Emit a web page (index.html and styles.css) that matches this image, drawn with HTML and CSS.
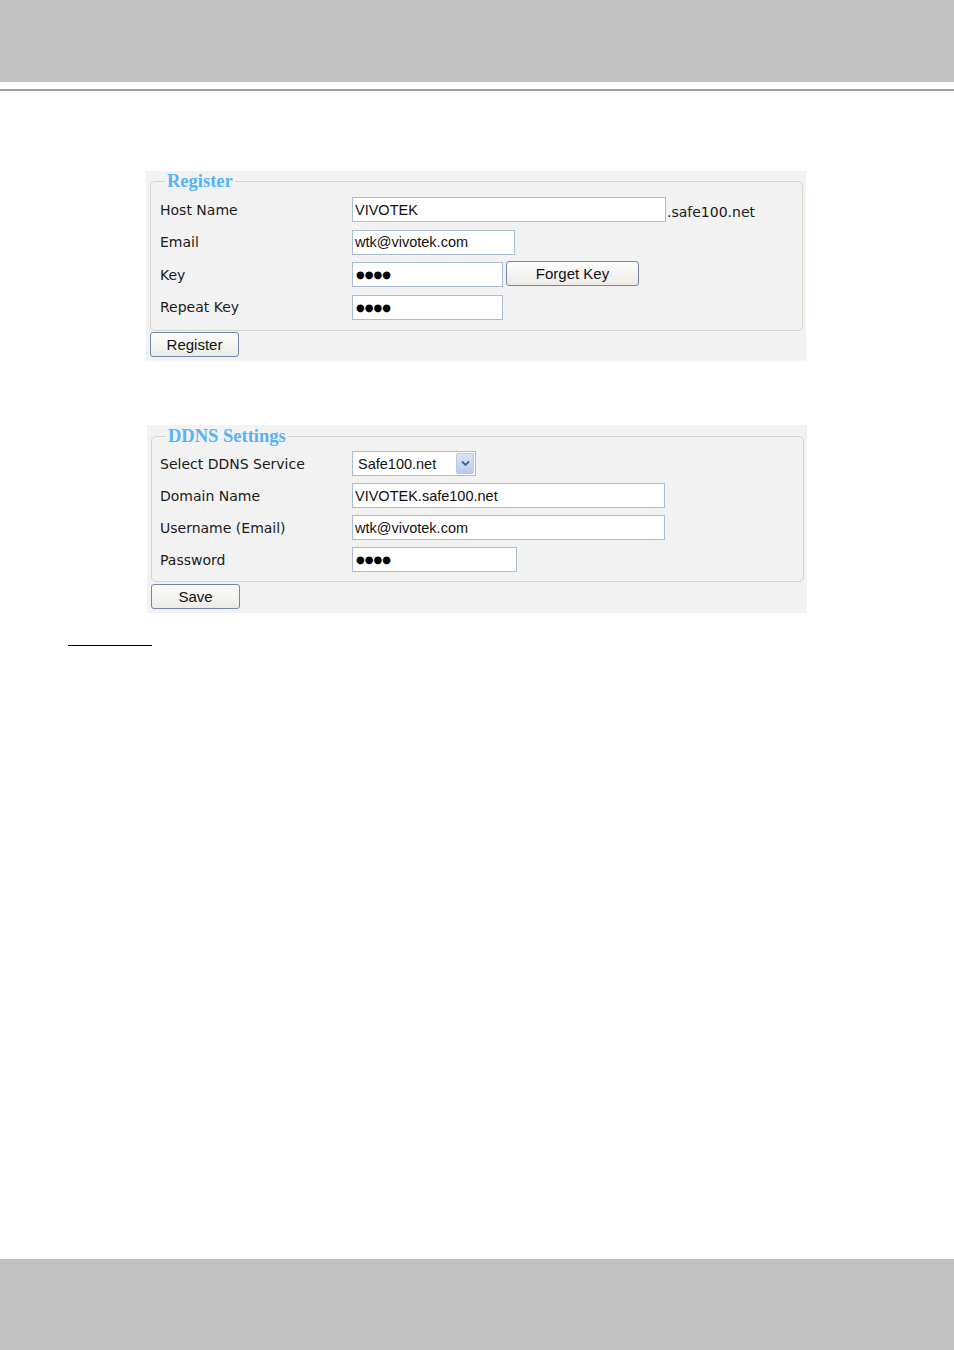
FILE: index.html
```html
<!DOCTYPE html>
<html lang="en">
<head>
    <meta charset="UTF-8">
    <title>DDNS</title>
    <link rel="stylesheet" href="styles.css">
</head>
<body>
    <div class="page-head"></div>
    <div class="page-rule"></div>

    <div class="content">
        <div class="panel panel-register">
            <fieldset>
                <legend>Register</legend>
                <div class="form-row">
                    <label>Host Name</label>
                    <div class="field">
                        <input type="text" class="w-long" value="VIVOTEK">
                        <span class="suffix">.safe100.net</span>
                    </div>
                </div>
                <div class="form-row">
                    <label>Email</label>
                    <div class="field">
                        <input type="text" class="w-mail" value="wtk@vivotek.com">
                    </div>
                </div>
                <div class="form-row">
                    <label>Key</label>
                    <div class="field">
                        <input type="text" class="w-key masked" value="●●●●">
                        <button class="btn btn-forget">Forget Key</button>
                    </div>
                </div>
                <div class="form-row">
                    <label>Repeat Key</label>
                    <div class="field">
                        <input type="text" class="w-key masked" value="●●●●">
                    </div>
                </div>
            </fieldset>
            <button class="btn btn-main">Register</button>
        </div>

        <div class="panel panel-ddns">
            <fieldset>
                <legend>DDNS Settings</legend>
                <div class="form-row">
                    <label>Select DDNS Service</label>
                    <div class="field">
                        <div class="select">
                            <span>Safe100.net</span>
                            <span class="select-arrow">
                                <svg width="9" height="7" viewBox="0 0 9 7"><path d="M1 1.5 L4.5 5 L8 1.5" fill="none" stroke="#4a5f86" stroke-width="1.8"/></svg>
                            </span>
                        </div>
                    </div>
                </div>
                <div class="form-row">
                    <label>Domain Name</label>
                    <div class="field">
                        <input type="text" class="w-wide" value="VIVOTEK.safe100.net">
                    </div>
                </div>
                <div class="form-row">
                    <label>Username (Email)</label>
                    <div class="field">
                        <input type="text" class="w-wide" value="wtk@vivotek.com">
                    </div>
                </div>
                <div class="form-row">
                    <label>Password</label>
                    <div class="field">
                        <input type="text" class="w-pass masked" value="●●●●">
                    </div>
                </div>
            </fieldset>
            <button class="btn btn-main">Save</button>
        </div>

        <div class="note-rule"></div>
    </div>

    <div class="page-foot"></div>
</body>
</html>
```

FILE: styles.css
```css
* {
    box-sizing: border-box;
}

body {
    margin: 0;
    min-height: 1350px;
    display: flex;
    flex-direction: column;
    background: white;
    font-family: "DejaVu Sans", Verdana, sans-serif;
}

.page-head {
    height: 82px;
    background: #bfc0bf;
}

.page-rule {
    height: 2px;
    margin-top: 7px;
    background: #a0a0a0;
}

.content {
    padding-top: 80px;
}

.panel {
    width: 660px;
    height: 190px;
    background: #f2f2f2;
    padding: 0 3px 0 4px;
}

.panel-register { margin-left: 146px; }
.panel-ddns { margin-left: 147px; margin-top: 64px; height: 188px; }

fieldset {
    margin: 0;
    padding: 6px 9px 10px 9px;
    border: 1px solid #d4d4c6;
    border-radius: 5px;
    height: 160px;
}

.panel-ddns fieldset {
    height: 157px;
    padding: 4px 9px 10px 8px;
}

legend {
    margin-left: 5px;
    padding: 0 2px;
    color: #55b3f8;
    font-family: "Liberation Serif", "Times New Roman", serif;
    font-weight: bold;
    font-size: 18.5px;
    line-height: 20px;
}

.panel-ddns legend {
    margin-left: 6px;
    line-height: 22px;
}

.form-row {
    display: flex;
    align-items: center;
    height: 25px;
    margin-bottom: 7.5px;
}

.panel-ddns .form-row {
    margin-bottom: 7px;
}

.form-row label {
    width: 192px;
    font-size: 14px;
    color: #1a1a1a;
}

.panel-ddns .form-row label {
    width: 192px;
}

.field {
    display: flex;
    align-items: center;
    gap: 3px;
}

input {
    height: 25px;
    margin: 0;
    padding: 0 2px;
    border: 1px solid #a9bed5;
    background: white;
    font-family: "Liberation Sans", Arial, sans-serif;
    font-size: 14.5px;
    color: #111;
    outline: none;
}

.w-long { width: 314px; }
.w-mail { width: 163px; }
.w-key { width: 151px; }
.w-wide { width: 313px; }
.w-pass { width: 165px; }

.masked {
    padding: 0 3px;
    font-family: "DejaVu Sans", sans-serif;
    font-size: 10px;
    color: black;
}

.suffix {
    margin-left: -2px;
    padding-top: 4px;
    font-size: 14px;
    color: #1a1a1a;
}

.btn {
    height: 25px;
    padding: 0;
    border: 1px solid #7088a6;
    border-radius: 3px;
    background: linear-gradient(#fdfdfc, #ecebe6);
    font-family: "Liberation Sans", Arial, sans-serif;
    font-size: 15px;
    color: #111;
}

.btn-forget {
    width: 133px;
    margin-top: -2px;
}

.btn-main {
    width: 89px;
    margin-top: 1px;
}

.panel-ddns .btn-main {
    margin-top: 2px;
}

.select {
    width: 124px;
    height: 25px;
    border: 1px solid #a9bed5;
    background: white;
    display: flex;
    align-items: center;
    justify-content: space-between;
    padding: 0 1px 0 5px;
    font-family: "Liberation Sans", Arial, sans-serif;
    font-size: 14.5px;
    color: #111;
}

.select-arrow {
    width: 18px;
    height: 21px;
    border: 1px solid #b7c8e6;
    border-radius: 2px;
    background: linear-gradient(#dbe5f7, #b8cbee);
    display: flex;
    align-items: center;
    justify-content: center;
}

.note-rule {
    width: 84px;
    margin: 32px 0 0 68px;
    border-top: 1px solid black;
}

.page-foot {
    margin-top: auto;
    height: 91px;
    background: #bfc0bf;
}
```
